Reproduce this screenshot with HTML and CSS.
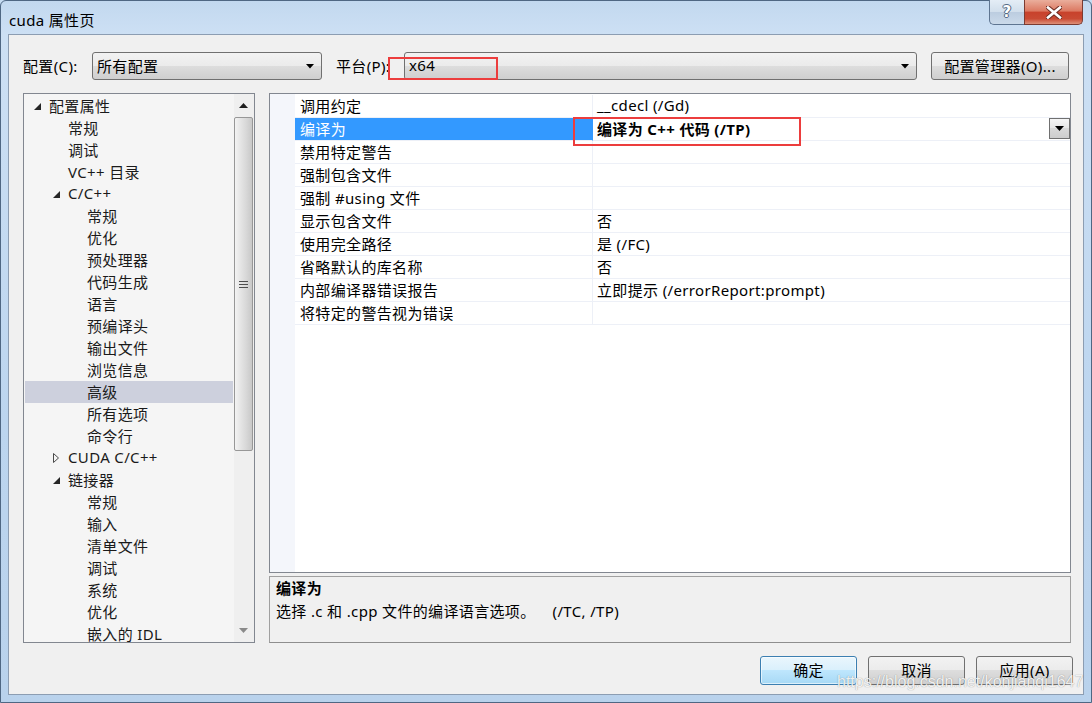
FILE: index.html
```html
<!DOCTYPE html>
<html lang="zh-CN">
<head>
<meta charset="utf-8">
<title>cuda 属性页</title>
<link rel="stylesheet" href="styles.css">
</head>
<body>
<div class="window">
  <div class="titlebar">
    <span class="title">cuda 属性页</span>
    <div class="caption-btns">
      <div class="cb help"><span class="help-glyph">?</span></div>
      <div class="cb close">
        <svg width="16" height="13" viewBox="0 0 16 13">
          <path d="M2 1.5 L14 11.5 M14 1.5 L2 11.5" stroke="#6b2a20" stroke-width="4.6" stroke-linecap="square" fill="none"/>
          <path d="M2 1.5 L14 11.5 M14 1.5 L2 11.5" stroke="#ffffff" stroke-width="2.6" stroke-linecap="square" fill="none"/>
        </svg>
      </div>
    </div>
  </div>

  <div class="client">
    <div class="toprow">
      <span class="lbl lbl-c">配置(C):</span>
      <div class="combo combo-c">
        <span>所有配置</span>
        <svg class="caret" width="8" height="5" viewBox="0 0 8 5"><polygon points="0,0 8,0 4,4.5" fill="#000"/></svg>
      </div>
      <span class="lbl lbl-p">平台(P):</span>
      <div class="combo combo-p">
        <span>x64</span>
        <svg class="caret" width="8" height="5" viewBox="0 0 8 5"><polygon points="0,0 8,0 4,4.5" fill="#000"/></svg>
        <div class="redbox redbox-p"></div>
      </div>
      <button class="btn btn-mgr">配置管理器(O)...</button>
    </div>

    <div class="main">
      <div class="tree">
        <ul class="tree-list">
          <li class="node l0"><span class="tw"><svg width="7" height="7" viewBox="0 0 7 7"><polygon points="7,0 7,7 0,7" fill="#262626"/></svg></span>配置属性</li>
          <li class="node l1"><span class="tw"></span>常规</li>
          <li class="node l1"><span class="tw"></span>调试</li>
          <li class="node l1"><span class="tw"></span>VC++ 目录</li>
          <li class="node l1"><span class="tw"><svg width="7" height="7" viewBox="0 0 7 7"><polygon points="7,0 7,7 0,7" fill="#262626"/></svg></span>C/C++</li>
          <li class="node l2"><span class="tw"></span>常规</li>
          <li class="node l2"><span class="tw"></span>优化</li>
          <li class="node l2"><span class="tw"></span>预处理器</li>
          <li class="node l2"><span class="tw"></span>代码生成</li>
          <li class="node l2"><span class="tw"></span>语言</li>
          <li class="node l2"><span class="tw"></span>预编译头</li>
          <li class="node l2"><span class="tw"></span>输出文件</li>
          <li class="node l2"><span class="tw"></span>浏览信息</li>
          <li class="node l2 sel"><span class="tw"></span>高级</li>
          <li class="node l2"><span class="tw"></span>所有选项</li>
          <li class="node l2"><span class="tw"></span>命令行</li>
          <li class="node l1"><span class="tw"><svg width="7" height="10" viewBox="0 0 7 10"><polygon points="0.5,0.5 5.5,5 0.5,9.5" fill="none" stroke="#4a4a4a" stroke-width="1"/></svg></span>CUDA C/C++</li>
          <li class="node l1"><span class="tw"><svg width="7" height="7" viewBox="0 0 7 7"><polygon points="7,0 7,7 0,7" fill="#262626"/></svg></span>链接器</li>
          <li class="node l2"><span class="tw"></span>常规</li>
          <li class="node l2"><span class="tw"></span>输入</li>
          <li class="node l2"><span class="tw"></span>清单文件</li>
          <li class="node l2"><span class="tw"></span>调试</li>
          <li class="node l2"><span class="tw"></span>系统</li>
          <li class="node l2"><span class="tw"></span>优化</li>
          <li class="node l2"><span class="tw"></span>嵌入的 IDL</li>
        </ul>
        <div class="vscroll">
          <div class="sb-btn"><svg width="9" height="5" viewBox="0 0 9 5"><polygon points="4.5,0 9,5 0,5" fill="#1e1e1e"/></svg></div>
          <div class="thumb">
            <svg width="9" height="7" viewBox="0 0 9 7">
              <path d="M0 0.5 H9 M0 3.5 H9 M0 6.5 H9" stroke="#4d4d4d" stroke-width="1"/>
            </svg>
          </div>
          <div class="track"></div>
          <div class="sb-btn"><svg width="9" height="5" viewBox="0 0 9 5"><polygon points="0,0 9,0 4.5,5" fill="#8a8a8a"/></svg></div>
        </div>
      </div>

      <div class="right">
        <div class="grid">
          <div class="prow"><div class="pname">调用约定</div><div class="pval">__cdecl (/Gd)</div></div>
          <div class="prow sel"><div class="pname">编译为</div><div class="pval"><b>编译为 C++ 代码 (/TP)</b>
            <span class="ddbtn"><svg width="9" height="5" viewBox="0 0 9 5"><polygon points="0,0 9,0 4.5,5" fill="#000"/></svg></span>
            <div class="redbox redbox-v"></div></div></div>
          <div class="prow"><div class="pname">禁用特定警告</div><div class="pval"></div></div>
          <div class="prow"><div class="pname">强制包含文件</div><div class="pval"></div></div>
          <div class="prow"><div class="pname">强制 #using 文件</div><div class="pval"></div></div>
          <div class="prow"><div class="pname">显示包含文件</div><div class="pval">否</div></div>
          <div class="prow"><div class="pname">使用完全路径</div><div class="pval">是 (/FC)</div></div>
          <div class="prow"><div class="pname">省略默认的库名称</div><div class="pval">否</div></div>
          <div class="prow"><div class="pname">内部编译器错误报告</div><div class="pval">立即提示 (/errorReport:prompt)</div></div>
          <div class="prow"><div class="pname">将特定的警告视为错误</div><div class="pval"></div></div>
        </div>
        <div class="desc">
          <div class="desc-title">编译为</div>
          <div class="desc-text">选择 .c 和 .cpp 文件的编译语言选项。<span class="desc-opts">(/TC, /TP)</span></div>
        </div>
      </div>
    </div>

    <div class="buttons">
      <button class="btn btn-dlg btn-ok">确定</button>
      <button class="btn btn-dlg">取消</button>
      <button class="btn btn-dlg">应用(A)</button>
    </div>
  </div>
  <div class="watermark">https://blog.csdn.net/konjianqi1647</div>
</div>
</body>
</html>
```

FILE: styles.css
```css
* { box-sizing: border-box; }
html, body { margin: 0; padding: 0; }
body {
  width: 1092px;
  height: 703px;
  overflow: hidden;
  background: #c6dcf2;
  font-family: "Noto Sans", "Noto Sans CJK SC", sans-serif;
  font-size: 15px;
  letter-spacing: 0.35px;
  color: #000;
}

.window {
  position: relative;
  width: 1092px;
  height: 703px;
  border: 1px solid #4f6783;
  border-radius: 6px 6px 0 0;
  background: linear-gradient(to bottom, #c2d8ef 0px, #cde0f4 34px, #bcd5ef 60%, #b9d2ec 100%);
  display: flex;
  flex-direction: column;
  padding: 0 7px 7px 7px;
}

.titlebar {
  height: 33px;
  flex: none;
  display: flex;
  justify-content: space-between;
  align-items: flex-start;
}
.title {
  margin-top: 11px;
  padding-left: 1px;
  line-height: 16px;
  font-size: 15px;
  color: #000;
}
.caption-btns {
  display: flex;
  margin-top: -1px;
  margin-right: 1px;
}
.cb {
  height: 25px;
  display: flex;
  align-items: center;
  justify-content: center;
  border: 1px solid #5e7591;
  border-top: none;
}
.help {
  width: 35px;
  border-right: none;
  border-radius: 0 0 0 5px;
  background: linear-gradient(#e4edf6, #d2dfec 48%, #bccde0 52%, #cbdaea);
}
.help-glyph {
  font-family: "DejaVu Sans", sans-serif;
  font-weight: bold;
  font-size: 15px;
  line-height: 1;
  color: #fff;
  text-shadow: 0 0 1px #3d5470, 1px 0 0 #5a6f88, -1px 0 0 #5a6f88, 0 1px 0 #5a6f88, 0 -1px 0 #5a6f88;
}
.close {
  width: 59px;
  border-color: #7b3b31;
  border-radius: 0 0 5px 0;
  background: linear-gradient(#eaae9c, #dc7a63 45%, #c8422c 52%, #c94a33 78%, #de9078);
}

.client {
  flex: 1;
  background: #f0f0f0;
  border: 1px solid #8c9db2;
  padding: 17px 12px 0 14px;
  display: flex;
  flex-direction: column;
}

.toprow {
  display: flex;
  align-items: center;
  height: 28px;
}
.lbl { white-space: nowrap; padding-bottom: 2px; }
.lbl-c { width: 69px; }
.lbl-p { width: 68px; margin-left: 14px; }

.combo {
  position: relative;
  height: 28px;
  border: 1px solid #707070;
  border-radius: 3px;
  background: linear-gradient(#f2f2f2, #ebebeb 50%, #dddddd 50%, #cfcfcf);
  display: flex;
  align-items: center;
  justify-content: space-between;
  padding: 0 7px 2px 4px;
}
.combo-c { width: 230px; }
.combo-p { width: 513px; }
.caret { display: block; margin-top: 2px; }

.redbox {
  position: absolute;
  border: 2px solid #ec3d3d;
  pointer-events: none;
}
.redbox-p { left: -17px; top: 4px; width: 110px; height: 23px; }
.redbox-v { left: -20px; top: -1px; width: 228px; height: 29px; }

.btn {
  height: 28px;
  border: 1px solid #707070;
  border-radius: 3px;
  background: linear-gradient(#f2f2f2, #ebebeb 50%, #dddddd 50%, #cfcfcf);
  font: inherit;
  letter-spacing: inherit;
  color: #000;
  padding: 0 0 2px 0;
  display: flex;
  align-items: center;
  justify-content: center;
  white-space: nowrap;
}
.btn-mgr { width: 138px; margin-left: 14px; }

.main {
  display: flex;
  gap: 14px;
  margin-top: 13px;
  height: 550px;
}

.tree {
  width: 232px;
  flex: none;
  border: 1px solid #828790;
  background: #f5f5f5;
  display: flex;
  overflow: hidden;
}
.tree-list {
  width: 210px;
  flex: none;
  list-style: none;
  margin: 0;
  padding: 1px 0 0 0;
  overflow: hidden;
}
.node {
  height: 22px;
  display: flex;
  align-items: center;
  margin: 0 1px;
  padding-bottom: 2px;
  white-space: nowrap;
  color: #1a1a1a;
}
.node.sel { background: #cdd0dd; }
.l1 { padding-left: 19px; }
.l2 { padding-left: 38px; }
.tw {
  width: 24px;
  flex: none;
  display: flex;
  align-items: center;
  padding-left: 9px;
  margin-top: 2px;
}
.tw svg { display: block; }

.vscroll {
  width: 20px;
  flex: none;
  display: flex;
  flex-direction: column;
  background: #efefef;
}
.sb-btn {
  height: 23px;
  flex: none;
  display: flex;
  align-items: center;
  justify-content: center;
  padding-right: 1px;
}
.thumb {
  height: 334px;
  flex: none;
  margin-right: 1px;
  border: 1px solid #979797;
  border-radius: 2px;
  background: linear-gradient(to right, #f3f3f3, #e4e4e4 35%, #d8d8d8 65%, #c8c8c8);
  display: flex;
  align-items: center;
  justify-content: center;
}
.track { flex: 1; }

.right {
  width: 802px;
  flex: none;
  display: flex;
  flex-direction: column;
  gap: 3px;
}
.grid {
  height: 480px;
  flex: none;
  border: 1px solid #828790;
  background: linear-gradient(to right, #f4f6fb 25px, #ffffff 25px);
  padding-top: 1px;
  display: flex;
  flex-direction: column;
}
.prow {
  display: flex;
  height: 23px;
  margin-left: 25px;
}
.pname {
  width: 298px;
  flex: none;
  border-bottom: 1px solid #edf0f7;
  border-right: 1px solid #edf0f7;
  padding: 0 0 2px 5px;
  display: flex;
  align-items: center;
  white-space: nowrap;
}
.pval {
  position: relative;
  flex: 1;
  border-bottom: 1px solid #edf0f7;
  padding: 0 0 2px 4px;
  display: flex;
  align-items: center;
  justify-content: space-between;
  white-space: nowrap;
}
.prow.sel .pname {
  background: #3399ff;
  border-right-color: #3399ff;
  color: #fff;
}
.ddbtn {
  width: 21px;
  height: 21px;
  align-self: flex-start;
  border: 1px solid #707070;
  background: linear-gradient(#f6f6f6, #e6e6e6 50%, #d9d9d9 50%, #cdcdcd);
  display: flex;
  align-items: center;
  justify-content: center;
}

.desc {
  flex: 1;
  border: 1px solid #a0a0a0;
  border-bottom-color: #8e8e8e;
  background: #f0f0f0;
  padding: 1px 6px;
}
.desc-title {
  font-weight: bold;
  line-height: 20px;
}
.desc-text {
  line-height: 20px;
  margin-top: 3px;
  white-space: nowrap;
}
.desc-opts { margin-left: 17px; }

.buttons {
  display: flex;
  justify-content: flex-end;
  gap: 11px;
  margin-top: 13px;
  margin-right: -2px;
}
.btn-dlg {
  width: 97px;
  height: 29px;
}
.btn-ok {
  border-color: #3c7fb1;
  background: linear-gradient(#eaf6fd, #d9f0fc 50%, #bee6fd 50%, #a7d9f5);
  box-shadow: inset 0 0 0 1px rgba(255,255,255,0.6);
}

.watermark {
  position: absolute;
  left: 836px;
  top: 672px;
  font-family: "Liberation Sans", sans-serif;
  font-size: 16px;
  letter-spacing: 0;
  color: rgba(255,255,255,0.9);
  text-shadow: 0 0 1px rgba(60,60,60,0.6);
  white-space: nowrap;
  pointer-events: none;
}
```
